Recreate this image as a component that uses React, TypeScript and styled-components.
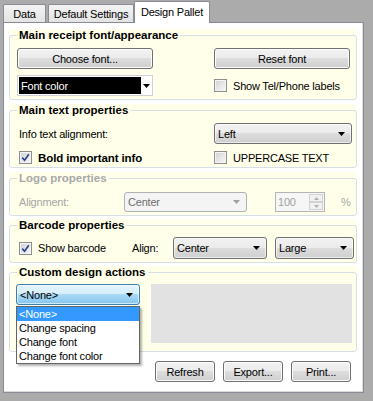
import styled, { createGlobalStyle } from "styled-components";

const GlobalStyle = createGlobalStyle`
  html, body {
    margin: 0;
    padding: 0;
    background: #ababab;
  }
  body {
    font-family: "Liberation Sans", Arial, sans-serif;
    font-size: 11px;
    letter-spacing: -0.2px;
    color: #000;
  }
`;

const Window = styled.div`
  width: 373px;
  height: 401px;
  box-sizing: border-box;
  padding: 1px 0 0 3px;
`;

const TabStrip = styled.div`
  display: flex;
  align-items: flex-end;
  height: 21px;
  position: relative;
  z-index: 1;
`;

const Tab = styled.div<{ $active?: boolean; $w: number; $gap?: number }>`
  box-sizing: border-box;
  width: ${(p) => p.$w}px;
  height: ${(p) => (p.$active ? 22 : 18)}px;
  margin-right: ${(p) => p.$gap ?? 0}px;
  margin-bottom: ${(p) => (p.$active ? -1 : 0)}px;
  padding-bottom: ${(p) => (p.$active ? 1 : 0)}px;
  border: 1px solid #898c95;
  border-bottom: none;
  border-radius: 2px 2px 0 0;
  background: ${(p) => (p.$active ? "#fff" : "linear-gradient(#f3f3f3, #e3e3e3)")};
  display: flex;
  align-items: center;
  justify-content: center;
  white-space: nowrap;
`;

const Panel = styled.div`
  box-sizing: border-box;
  width: 361px;
  height: 371px;
  background: #fff;
  border: 1px solid #898c95;
  box-shadow: inset -1px -1px 0 #dadada;
  padding: 6px 6px 0 5px;
  display: flex;
  flex-direction: column;
`;

const GroupBox = styled.div<{ $h: number; $mt?: number }>`
  flex-shrink: 0;
  height: ${(p) => p.$h}px;
  margin-top: ${(p) => p.$mt ?? 0}px;
  background: #ffffea;
  border-radius: 3px;
`;

const Frame = styled.fieldset`
  box-sizing: border-box;
  height: 100%;
  min-width: 0;
  margin: 0;
  padding: 0 7px;
  border: 1px solid #d5dfe5;
  border-radius: 3px;
`;

const Legend = styled.legend<{ $disabled?: boolean }>`
  padding: 0 2px;
  font-size: 11.5px;
  font-weight: bold;
  letter-spacing: 0;
  line-height: 13px;
  color: ${(p) => (p.$disabled ? "#a9a9a9" : "#000")};
`;

const TwoCols = styled.div<{ $pt: number; $rowGap: number }>`
  display: grid;
  grid-template-columns: 197px 138px;
  grid-auto-rows: 21px;
  row-gap: ${(p) => p.$rowGap}px;
  padding-top: ${(p) => p.$pt}px;
  align-items: center;
`;

const Row = styled.div<{ $pt: number; $h: number; $align?: string }>`
  display: flex;
  align-items: ${(p) => p.$align ?? "center"};
  height: ${(p) => p.$h}px;
  padding-top: ${(p) => p.$pt}px;
`;

const Label = styled.span<{ $w?: number; $disabled?: boolean; $inset?: number }>`
  flex-shrink: 0;
  width: ${(p) => (p.$w ? `${p.$w}px` : "auto")};
  padding-left: ${(p) => p.$inset ?? 0}px;
  color: ${(p) => (p.$disabled ? "#a6a6a6" : "#000")};
  white-space: nowrap;
`;

const Button = styled.button<{ $w: number }>`
  box-sizing: border-box;
  width: ${(p) => p.$w}px;
  height: 21px;
  padding: 0;
  border: 1px solid #707070;
  border-radius: 3px;
  background: linear-gradient(#f2f2f2 0%, #ebebeb 49%, #dddddd 50%, #cfcfcf 100%);
  box-shadow: inset 0 0 0 1px #fbfbfb;
  font: inherit;
  letter-spacing: inherit;
  color: #000;
  text-align: center;
`;

type ComboVariant = "normal" | "focus" | "disabled";

const comboBorder: Record<ComboVariant, string> = {
  normal: "#707070",
  focus: "#3c7fb1",
  disabled: "#adb2b5",
};

const comboBg: Record<ComboVariant, string> = {
  normal: "linear-gradient(#f2f2f2 0%, #ebebeb 49%, #dddddd 50%, #cfcfcf 100%)",
  focus: "linear-gradient(#e5f4fc 0%, #d4eefb 49%, #a9d9f5 50%, #86c6ee 100%)",
  disabled: "#f4f4f4",
};

const Combo = styled.div<{ $w: number; $h?: number; $variant?: ComboVariant; $ml?: number }>`
  box-sizing: border-box;
  flex-shrink: 0;
  width: ${(p) => p.$w}px;
  height: ${(p) => p.$h ?? 21}px;
  margin-left: ${(p) => p.$ml ?? 0}px;
  display: flex;
  align-items: center;
  justify-content: space-between;
  padding: 0 6px 0 3px;
  border: 1px solid ${(p) => comboBorder[p.$variant ?? "normal"]};
  border-radius: 3px;
  background: ${(p) => comboBg[p.$variant ?? "normal"]};
  box-shadow: ${(p) => (p.$variant === "disabled" ? "none" : "inset 0 0 0 1px rgba(255,255,255,0.6)")};
  color: ${(p) => (p.$variant === "disabled" ? "#6d6d6d" : "#000")};
`;

const ColorCombo = styled.div`
  box-sizing: border-box;
  width: 136px;
  height: 21px;
  display: flex;
  padding: 1px;
  border: 1px solid #cfd1d4;
  background: #fff;
`;

const Swatch = styled.div<{ $color: string }>`
  flex: 1;
  display: flex;
  align-items: center;
  padding-left: 2px;
  background: ${(p) => p.$color};
  color: #fff;
`;

const ArrowBox = styled.div`
  width: 10px;
  display: flex;
  align-items: center;
  justify-content: center;
`;

const CheckRow = styled.label<{ $w?: number; $inset?: number; $bold?: boolean }>`
  flex-shrink: 0;
  display: flex;
  align-items: center;
  gap: 6px;
  width: ${(p) => (p.$w ? `${p.$w}px` : "auto")};
  padding-left: ${(p) => p.$inset ?? 0}px;
  font-weight: ${(p) => (p.$bold ? "bold" : "normal")};
  font-size: ${(p) => (p.$bold ? "11.5px" : "11px")};
  letter-spacing: ${(p) => (p.$bold ? "-0.1px" : "-0.2px")};
  white-space: nowrap;
`;

const Box = styled.span`
  box-sizing: border-box;
  width: 13px;
  height: 13px;
  flex-shrink: 0;
  display: inline-flex;
  align-items: center;
  justify-content: center;
  border: 1px solid #8e8f8f;
  background: linear-gradient(135deg, #d2d2d2, #f8f8f8);
  box-shadow: inset 0 0 0 1px #f4f4f4;
`;

const Numeric = styled.div`
  box-sizing: border-box;
  flex-shrink: 0;
  width: 50px;
  height: 20px;
  margin-left: 28px;
  display: flex;
  padding: 1px 1px 1px 2px;
  border: 1px solid #b5b5b5;
  background: #f6f6f6;
  color: #a0a0a0;
`;

const NumText = styled.span`
  flex: 1;
  display: flex;
  align-items: center;
`;

const Spin = styled.div`
  width: 14px;
  display: flex;
  flex-direction: column;
`;

const SpinButton = styled.div`
  flex: 1;
  display: flex;
  align-items: center;
  justify-content: center;
  border: 1px solid #d2d2d2;
  background: #f1f1f1;
`;

const Percent = styled(Label)`
  margin-left: 16px;
`;

const ComboWrap = styled.div`
  position: relative;
  flex-shrink: 0;
  margin-left: -1px;
`;

const DropList = styled.ul`
  position: absolute;
  top: 100%;
  left: 0;
  z-index: 2;
  box-sizing: border-box;
  width: 124px;
  margin: 1px 0 0;
  padding: 0;
  list-style: none;
  border: 1px solid #646464;
  background: #fff;
  box-shadow: 2px 2px 2px rgba(0, 0, 0, 0.3);
`;

const DropItem = styled.li<{ $selected?: boolean }>`
  height: 14px;
  line-height: 14px;
  padding-left: 2px;
  white-space: nowrap;
  background: ${(p) => (p.$selected ? "#3399ff" : "#fff")};
  color: ${(p) => (p.$selected ? "#fff" : "#000")};
`;

const Preview = styled.div`
  flex-shrink: 0;
  width: 201px;
  height: 59px;
  margin-left: 11px;
  background: #e2e2e2;
`;

const Footer = styled.div`
  display: flex;
  justify-content: flex-end;
  gap: 8px;
  margin-top: 9px;
  padding-right: 6px;
`;

function Arrow({ color = "#000" }: { color?: string }) {
  return (
    <svg width="7" height="4" viewBox="0 0 7 4">
      <path d="M0 0h7L3.5 4z" fill={color} />
    </svg>
  );
}

function Check({ checked }: { checked?: boolean }) {
  return (
    <Box>
      {checked && (
        <svg width="9" height="9" viewBox="0 0 9 9">
          <path d="M1.2 4.6 L3.6 7.2 L7.8 1.3" fill="none" stroke="#26428b" strokeWidth="1.6" />
        </svg>
      )}
    </Box>
  );
}

function SpinArrow({ up }: { up?: boolean }) {
  return (
    <svg width="5" height="3" viewBox="0 0 5 3">
      <path d={up ? "M0 3h5L2.5 0z" : "M0 0h5L2.5 3z"} fill="#b0b0b0" />
    </svg>
  );
}

export default function App() {
  return (
    <>
      <GlobalStyle />
      <Window>
        <TabStrip>
          <Tab $w={43} $gap={2}>Data</Tab>
          <Tab $w={86}>Default Settings</Tab>
          <Tab $w={76} $active>Design Pallet</Tab>
        </TabStrip>
        <Panel>
          <GroupBox $h={71}>
            <Frame>
              <Legend>Main receipt font/appearance</Legend>
              <TwoCols $pt={6} $rowGap={6}>
                <Button $w={136}>Choose font...</Button>
                <Button $w={136}>Reset font</Button>
                <ColorCombo>
                  <Swatch $color="#000">Font color</Swatch>
                  <ArrowBox>
                    <Arrow />
                  </ArrowBox>
                </ColorCombo>
                <CheckRow>
                  <Check />
                  Show Tel/Phone labels
                </CheckRow>
              </TwoCols>
            </Frame>
          </GroupBox>

          <GroupBox $h={64} $mt={4}>
            <Frame>
              <Legend>Main text properties</Legend>
              <TwoCols $pt={6} $rowGap={3}>
                <Label $inset={2}>Info text alignment:</Label>
                <Combo $w={138}>
                  Left
                  <Arrow />
                </Combo>
                <CheckRow $inset={2} $bold>
                  <Check checked />
                  Bold important info
                </CheckRow>
                <CheckRow>
                  <Check />
                  UPPERCASE TEXT
                </CheckRow>
              </TwoCols>
            </Frame>
          </GroupBox>

          <GroupBox $h={44} $mt={4}>
            <Frame disabled>
              <Legend $disabled>Logo properties</Legend>
              <Row $pt={7} $h={20}>
                <Label $inset={2} $w={105} $disabled>
                  Alignment:
                </Label>
                <Combo $w={123} $h={20} $variant="disabled">
                  Center
                  <Arrow color="#a0a0a0" />
                </Combo>
                <Numeric>
                  <NumText>100</NumText>
                  <Spin>
                    <SpinButton>
                      <SpinArrow up />
                    </SpinButton>
                    <SpinButton>
                      <SpinArrow />
                    </SpinButton>
                  </Spin>
                </Numeric>
                <Percent $disabled>%</Percent>
              </Row>
            </Frame>
          </GroupBox>

          <GroupBox $h={44} $mt={3}>
            <Frame>
              <Legend>Barcode properties</Legend>
              <Row $pt={5} $h={22}>
                <CheckRow $inset={2} $w={113}>
                  <Check checked />
                  Show barcode
                </CheckRow>
                <Label $w={41}>Align:</Label>
                <Combo $w={94} $h={22}>
                  Center
                  <Arrow />
                </Combo>
                <Combo $w={79} $h={22} $ml={8}>
                  Large
                  <Arrow />
                </Combo>
              </Row>
            </Frame>
          </GroupBox>

          <GroupBox $h={86} $mt={3}>
            <Frame>
              <Legend>Custom design actions</Legend>
              <Row $pt={5} $h={59} $align="flex-start">
                <ComboWrap>
                  <Combo $w={124} $variant="focus">
                    &lt;None&gt;
                    <Arrow />
                  </Combo>
                  <DropList>
                    <DropItem $selected>&lt;None&gt;</DropItem>
                    <DropItem>Change spacing</DropItem>
                    <DropItem>Change font</DropItem>
                    <DropItem>Change font color</DropItem>
                  </DropList>
                </ComboWrap>
                <Preview />
              </Row>
            </Frame>
          </GroupBox>

          <Footer>
            <Button $w={60}>Refresh</Button>
            <Button $w={60}>Export...</Button>
            <Button $w={60}>Print...</Button>
          </Footer>
        </Panel>
      </Window>
    </>
  );
}
